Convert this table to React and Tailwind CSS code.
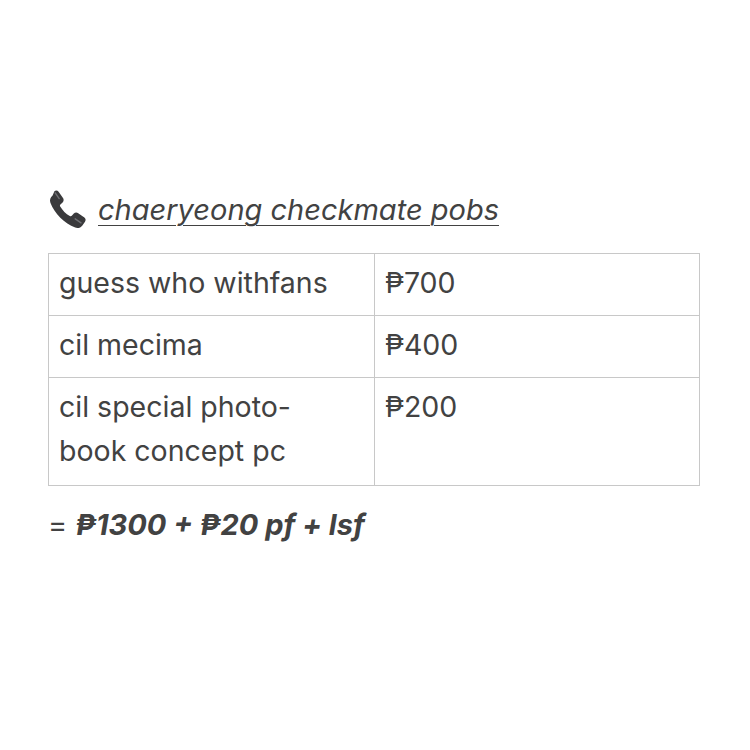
import React from 'react';

const rows = [
  { item: 'guess who withfans', price: '₱700' },
  { item: 'cil mecima', price: '₱400' },
  { item: 'cil special photo-book concept pc', price: '₱200', split: ['cil special photo-', 'book concept pc'] },
];

const PhoneIcon = () => (
  <svg width="40" height="40" viewBox="2 2 20 20" className="shrink-0">
    <path
      d="M5.2 2.6c.7-.5 1.6-.4 2.1.3l2.2 3.1c.5.7.4 1.6-.2 2.2l-1.1 1c-.3.3-.3.7-.1 1 1.2 2 2.8 3.6 4.8 4.8.3.2.7.2 1-.1l1-1.1c.6-.6 1.5-.7 2.2-.2l3.1 2.2c.7.5.8 1.4.3 2.1l-1.3 1.8c-.8 1.1-2.3 1.6-3.6 1.1C10.3 18.8 5.2 13.7 3.2 8.4c-.5-1.3 0-2.8 1.1-3.6z"
      fill="#3a3a3c"
    />
    <path d="M5.6 3.4l2 2.9" stroke="#707074" strokeWidth="0.7" strokeLinecap="round" fill="none" />
    <path d="M15.6 16.4l2.9 2" stroke="#707074" strokeWidth="0.7" strokeLinecap="round" fill="none" />
  </svg>
);

export default function App() {
  return (
    <div
      className="w-[750px] h-[750px] bg-white text-[#424242] pt-[188px] px-[48px]"
      style={{ fontFamily: 'Inter, "Noto Sans", sans-serif' }}
    >
      {/* Title */}
      <div className="flex items-center gap-[10px] h-[44px]">
        <PhoneIcon />
        <span className="italic underline underline-offset-[5px] decoration-1 text-[29px] leading-[44px]">
          chaeryeong checkmate pobs
        </span>
      </div>

      {/* Order table */}
      <table className="mt-[21px] w-[652px] border-collapse text-[28.5px] leading-[44px]">
        <tbody>
          {rows.map((row, i) => (
            <tr key={i}>
              <td
                className={`w-[326px] border border-[#c8c8c8] px-[10px] pt-[7px] align-top ${
                  row.split ? 'pb-[12px]' : 'pb-[10px]'
                }`}
              >
                {row.split ? (
                  <>
                    {row.split[0]}
                    <br />
                    {row.split[1]}
                  </>
                ) : (
                  row.item
                )}
              </td>
              <td className="border border-[#c8c8c8] px-[10px] pt-[7px] pb-[10px] align-top">{row.price}</td>
            </tr>
          ))}
        </tbody>
      </table>

      {/* Total */}
      <div className="mt-[17px] text-[29px] leading-[44px]">
        = <span className="font-bold italic">₱1300 + ₱20 pf + lsf</span>
      </div>
    </div>
  );
}
